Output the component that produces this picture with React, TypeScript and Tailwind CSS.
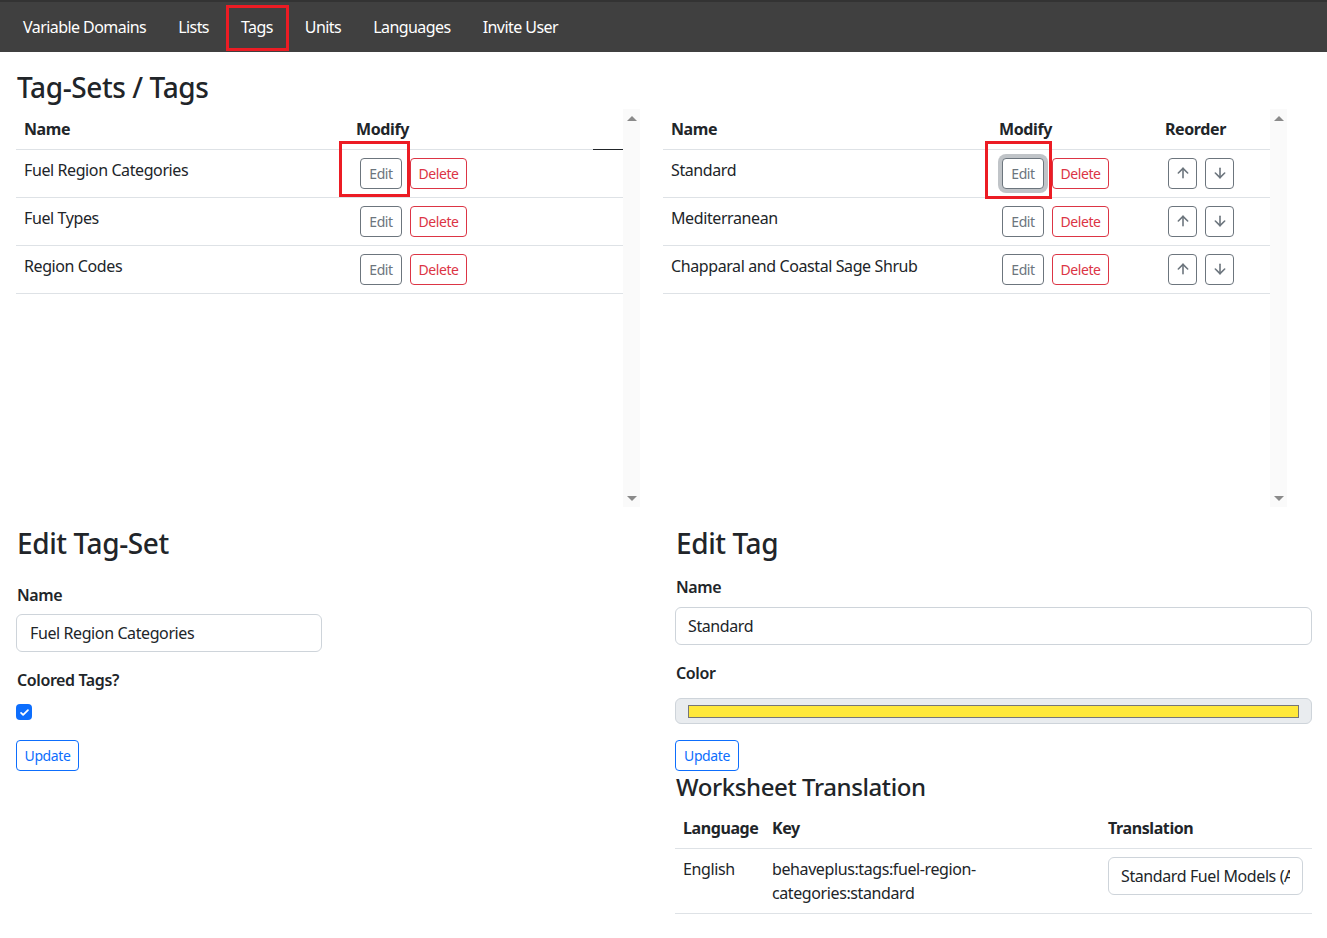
import { ArrowUp, ArrowDown } from 'lucide-react';

const tagSets = ['Fuel Region Categories', 'Fuel Types', 'Region Codes'];
const tags = ['Standard', 'Mediterranean', 'Chapparal and Coastal Sage Shrub'];
const navLinks = ['Variable Domains', 'Lists', 'Tags', 'Units', 'Languages', 'Invite User'];

const font = { fontFamily: '"Segoe UI", "Noto Sans", "Liberation Sans", sans-serif' };

const FakeScrollbar = () => (
  <div className="w-[17px] shrink-0 bg-[#fafafa] flex flex-col items-center justify-between pt-[7px] pb-[6px]">
    <div className="w-0 h-0 border-l-[5px] border-r-[5px] border-b-[5px] border-l-transparent border-r-transparent border-b-[#8a8a8a]" />
    <div className="w-0 h-0 border-l-[5px] border-r-[5px] border-t-[5px] border-l-transparent border-r-transparent border-t-[#8a8a8a]" />
  </div>
);

const Highlight = ({ className }: { className: string }) => (
  <div className={`absolute border-[3px] border-[#ec1c24] pointer-events-none ${className}`} />
);

const EditButton = ({ focused, mark }: { focused?: boolean; mark?: string }) => (
  <div className="relative">
    <button
      className={`h-[31px] w-[42px] text-[14px] leading-[21px] text-[#6c757d] border border-[#6c757d] rounded-[4px] bg-white ${
        focused ? 'shadow-[0_0_0_4px_rgba(130,138,145,0.5)]' : ''
      }`}
    >
      Edit
    </button>
    {mark && <Highlight className={mark} />}
  </div>
);

const DeleteButton = () => (
  <button className="h-[31px] w-[57px] text-[14px] leading-[21px] text-[#dc3545] border border-[#dc3545] rounded-[4px] bg-white">
    Delete
  </button>
);

const ArrowButton = ({ up }: { up?: boolean }) => (
  <button className="w-[29px] h-[31px] flex items-center justify-center border border-[#6c757d] rounded-[4px] text-[#6c757d]">
    {up ? <ArrowUp size={16} strokeWidth={2.4} /> : <ArrowDown size={16} strokeWidth={2.4} />}
  </button>
);

export default function App() {
  return (
    <div className="min-h-screen bg-white text-[#212529] text-[16px] leading-6 tracking-[-0.025em]" style={font}>
      {/* Navbar */}
      <nav className="h-[52px] bg-[#404040] border-t-2 border-[#333333] flex items-center pl-[23px] gap-[32px] tracking-[-0.035em]">
        {navLinks.map((link) => (
          <div key={link} className="relative text-white text-[16px]">
            {link}
            {link === 'Tags' && <Highlight className="-left-[15px] -right-[16px] -top-[10px] -bottom-[12px]" />}
          </div>
        ))}
      </nav>

      <div className="px-4">
        <h3 className="text-[28px] leading-[34px] font-medium pt-[18px] mb-[5px] pl-px">Tag-Sets / Tags</h3>

        {/* Tables */}
        <div className="flex gap-[23px]">
          <div className="w-[624px] h-[398px] flex">
            <div className="flex-1">
              <table className="w-full border-collapse table-fixed">
                <thead>
                  <tr className="h-10">
                    <th className="text-left font-bold px-2 w-[332px] border-b border-[#dee2e6]">Name</th>
                    <th className="text-left font-bold px-2 border-b border-[#dee2e6]">Modify</th>
                    <th className="w-[30px] border-b border-[#212529]" />
                  </tr>
                </thead>
                <tbody>
                  {tagSets.map((name, i) => (
                    <tr key={name} className="border-b border-[#dee2e6]">
                      <td className="align-top p-2 h-12">{name}</td>
                      <td className="align-top py-2 pl-[12px]" colSpan={2}>
                        <div className="flex gap-2">
                          <EditButton mark={i === 0 ? '-left-[21px] -right-[8px] -top-[17px] -bottom-[8px]' : undefined} />
                          <DeleteButton />
                        </div>
                      </td>
                    </tr>
                  ))}
                </tbody>
              </table>
            </div>
            <FakeScrollbar />
          </div>

          <div className="w-[624px] h-[398px] flex">
            <div className="flex-1">
              <table className="w-full border-collapse table-fixed">
                <thead>
                  <tr className="h-10 border-b border-[#dee2e6]">
                    <th className="text-left font-bold px-2 w-[328px]">Name</th>
                    <th className="text-left font-bold px-2 w-[166px]">Modify</th>
                    <th className="text-left font-bold px-2">Reorder</th>
                  </tr>
                </thead>
                <tbody>
                  {tags.map((name, i) => (
                    <tr key={name} className="border-b border-[#dee2e6]">
                      <td className="align-top p-2 h-12">{name}</td>
                      <td className="align-top py-2 pl-[11px]">
                        <div className="flex gap-2">
                          <EditButton
                            focused={i === 0}
                            mark={i === 0 ? '-left-[17px] -right-[8px] -top-[17px] -bottom-[10px]' : undefined}
                          />
                          <DeleteButton />
                        </div>
                      </td>
                      <td className="align-top py-2 pl-[11px]">
                        <div className="flex gap-2">
                          <ArrowButton up />
                          <ArrowButton />
                        </div>
                      </td>
                    </tr>
                  ))}
                </tbody>
              </table>
            </div>
            <FakeScrollbar />
          </div>
        </div>

        {/* Forms */}
        <div className="grid grid-cols-[636px_636px] gap-6 mt-[19px]">
          <div className="pl-px">
            <h3 className="text-[28px] leading-[34px] font-medium">Edit Tag-Set</h3>
            <label className="block font-semibold mt-[23px] mb-[7px]">Name</label>
            <div className="w-[306px] h-[38px] border border-[#ced4da] rounded-[6px] px-[13px] flex items-center -ml-px">
              Fuel Region Categories
            </div>
            <label className="block font-semibold mt-4 mb-3">Colored Tags?</label>
            <div className="w-4 h-4 rounded-[4px] bg-[#0d6efd] flex items-center justify-center -ml-px">
              <svg viewBox="0 0 16 16" className="w-[11px] h-[11px]">
                <path d="M3 8.5l3 3 7-7" fill="none" stroke="white" strokeWidth="2.6" strokeLinecap="round" strokeLinejoin="round" />
              </svg>
            </div>
            <button className="mt-[20px] h-[31px] w-[63px] text-[14px] leading-[21px] text-[#0d6efd] border border-[#0d6efd] rounded-[4px] -ml-px">
              Update
            </button>
          </div>

          <div className="-ml-[1px]">
            <h3 className="text-[28px] leading-[34px] font-medium pl-px">Edit Tag</h3>
            <label className="block font-semibold mt-[15px] mb-[8px] pl-px">Name</label>
            <div className="h-[38px] border border-[#ced4da] rounded-[6px] px-[12px] flex items-center">Standard</div>
            <label className="block font-semibold mt-4 mb-[13px] pl-px">Color</label>
            <div className="h-[26px] border border-[#ced4da] rounded-[6px] bg-[#e9ecef] px-3 flex items-center">
              <div className="flex-1 h-[13px] bg-[#ffe83a] border border-[#767676]" />
            </div>
            <button className="mt-[16px] h-[31px] w-[64px] text-[14px] leading-[21px] text-[#0d6efd] border border-[#0d6efd] rounded-[4px] block">
              Update
            </button>
            <h4 className="text-[24px] leading-[29px] font-medium mt-[1px] pl-px">Worksheet Translation</h4>
            <table className="w-full border-collapse table-fixed mt-[7px]">
              <thead>
                <tr className="h-10 border-b border-[#dee2e6]">
                  <th className="text-left font-bold px-2 w-[89px]">Language</th>
                  <th className="text-left font-bold px-2 w-[336px]">Key</th>
                  <th className="text-left font-bold px-2">Translation</th>
                </tr>
              </thead>
              <tbody>
                <tr className="border-b border-[#dee2e6]">
                  <td className="align-top p-2">English</td>
                  <td className="align-top p-2">
                    behaveplus:tags:fuel-region-
                    <br />
                    categories:standard
                  </td>
                  <td className="align-top py-2 pl-2 pr-2">
                    <input
                      readOnly
                      value="Standard Fuel Models (A"
                      className="w-[195px] h-[38px] border border-[#ced4da] rounded-[6px] px-3 text-[#212529] outline-none"
                    />
                  </td>
                </tr>
              </tbody>
            </table>
          </div>
        </div>
      </div>
    </div>
  );
}
